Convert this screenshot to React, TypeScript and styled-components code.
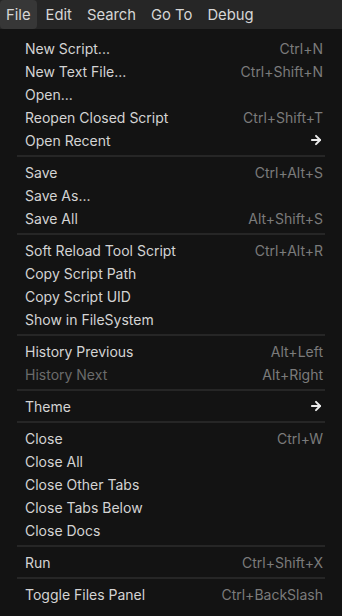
import React from "react";
import styled, { createGlobalStyle } from "styled-components";
import { ArrowRight } from "lucide-react";

const GlobalStyle = createGlobalStyle`
  html, body {
    margin: 0;
    padding: 0;
    background: #131313;
    font-family: Inter, "Noto Sans", sans-serif;
  }
`;

const Page = styled.div`
  width: 342px;
  height: 616px;
  display: flex;
  flex-direction: column;
  background: #131313;
  overflow: hidden;
`;

const MenuBar = styled.div`
  display: flex;
  align-items: stretch;
  gap: 3px;
  height: 29px;
  background: #262626;
`;

const MenuTitle = styled.div<{ $active?: boolean }>`
  display: flex;
  align-items: center;
  padding: 0 6px;
  font-size: 14.8px;
  color: #d6d6d6;
  border-radius: 4px;
  background: ${(p) => (p.$active ? "#373737" : "transparent")};
`;

const Menu = styled.div`
  display: flex;
  flex-direction: column;
  padding: 7.5px 17px 8px 17px;
`;

const Row = styled.div<{ $disabled?: boolean }>`
  display: flex;
  align-items: center;
  justify-content: space-between;
  height: 23px;
  padding: 0 2px 0 8px;
  font-size: 14px;
  color: ${(p) => (p.$disabled ? "#6b6b6b" : "#d4d4d4")};
`;

const Shortcut = styled.span`
  color: #7b7b7b;
  font-size: 14px;
`;

const Arrow = styled.span`
  display: flex;
  align-items: center;
  color: #eaeaea;
  margin-right: 0;
`;

const Separator = styled.div`
  height: 9px;
  display: flex;
  align-items: center;

  &::after {
    content: "";
    display: block;
    width: 100%;
    height: 2px;
    background: #262626;
  }
`;

type Item =
  | { label: string; shortcut?: string; submenu?: boolean; disabled?: boolean }
  | "sep";

const items: Item[] = [
  { label: "New Script...", shortcut: "Ctrl+N" },
  { label: "New Text File...", shortcut: "Ctrl+Shift+N" },
  { label: "Open..." },
  { label: "Reopen Closed Script", shortcut: "Ctrl+Shift+T" },
  { label: "Open Recent", submenu: true },
  "sep",
  { label: "Save", shortcut: "Ctrl+Alt+S" },
  { label: "Save As..." },
  { label: "Save All", shortcut: "Alt+Shift+S" },
  "sep",
  { label: "Soft Reload Tool Script", shortcut: "Ctrl+Alt+R" },
  { label: "Copy Script Path" },
  { label: "Copy Script UID" },
  { label: "Show in FileSystem" },
  "sep",
  { label: "History Previous", shortcut: "Alt+Left" },
  { label: "History Next", shortcut: "Alt+Right", disabled: true },
  "sep",
  { label: "Theme", submenu: true },
  "sep",
  { label: "Close", shortcut: "Ctrl+W" },
  { label: "Close All" },
  { label: "Close Other Tabs" },
  { label: "Close Tabs Below" },
  { label: "Close Docs" },
  "sep",
  { label: "Run", shortcut: "Ctrl+Shift+X" },
  "sep",
  { label: "Toggle Files Panel", shortcut: "Ctrl+BackSlash" },
];

const titles = ["File", "Edit", "Search", "Go To", "Debug"];

export default function App() {
  return (
    <Page>
      <GlobalStyle />
      <MenuBar>
        {titles.map((t, i) => (
          <MenuTitle key={t} $active={i === 0}>
            {t}
          </MenuTitle>
        ))}
      </MenuBar>
      <Menu>
        {items.map((it, i) =>
          it === "sep" ? (
            <Separator key={i} />
          ) : (
            <Row key={i} $disabled={it.disabled}>
              <span>{it.label}</span>
              {it.submenu ? (
                <Arrow>
                  <ArrowRight size={14} strokeWidth={3.4} />
                </Arrow>
              ) : it.shortcut ? (
                <Shortcut>{it.shortcut}</Shortcut>
              ) : null}
            </Row>
          )
        )}
      </Menu>
    </Page>
  );
}
